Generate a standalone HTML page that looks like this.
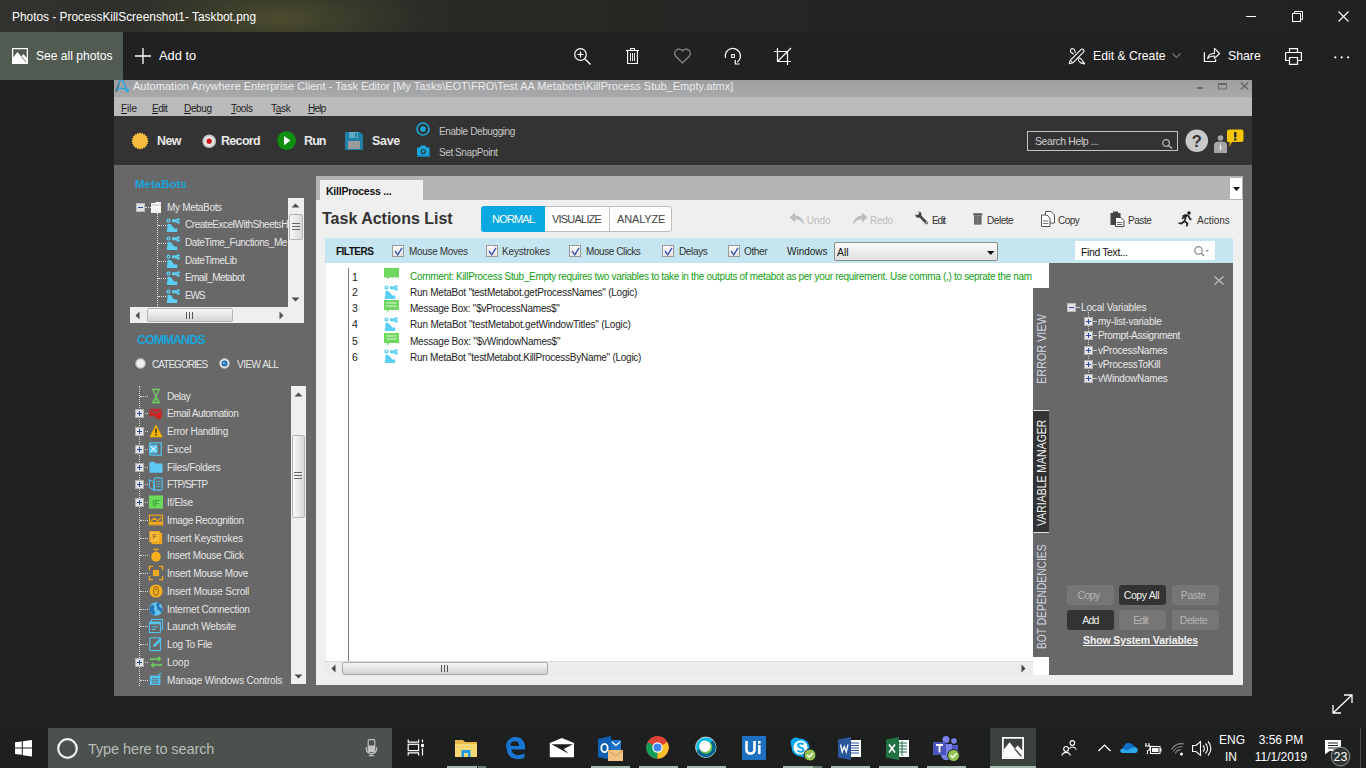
<!DOCTYPE html>
<html><head><meta charset="utf-8">
<style>
*{box-sizing:border-box;margin:0;padding:0}
html,body{width:1366px;height:768px;overflow:hidden;background:#212121;font-family:"Liberation Sans",sans-serif;position:relative}
.a{position:absolute;white-space:nowrap}
svg{position:absolute;overflow:visible}
#titlebar{left:0;top:0;width:1366px;height:32px;background:radial-gradient(ellipse 150px 45px at 280px 18px,#4b4c2e 0%,#3d3e2b 40%,rgba(40,40,36,0) 100%),linear-gradient(90deg,#32332f 0%,#2e2f2b 12%,#2a2b27 30%,#252523 55%,#222 100%)}
.pt{color:#fff;font-size:12.5px}
#toolbar{left:0;top:32px;width:1366px;height:48px;background:#212121}
#taskbar{left:0;top:728px;width:1366px;height:40px;background:#1e201f}

.menu{color:#1e1e1e;font-size:10px}
.tbt{color:#e8e8e8;font-size:12.5px;font-weight:bold}
.dbt{color:#c6c6c6;font-size:10px}
.mh{color:#1aa5dc;font-size:11.5px;font-weight:bold}
.tl{color:#e6e6e6;font-size:10px}
.pbox{width:9px;height:9px;background:#e4e4e4;border:1px solid #b0b0b0}
.pbox::before{content:"";position:absolute;left:1px;top:3px;width:5px;height:1px;background:#2c4aa0}
.pbox::after{content:"";position:absolute;left:3px;top:1px;width:1px;height:5px;background:#2c4aa0}

.seg{color:#444;font-size:11px}
.atb{color:#333;font-size:10px}
.cb{width:12px;height:12px;border:1px solid #9a9a9a;background:linear-gradient(#fafafa,#e6e6e6)}
.rn{color:#222;font-size:10.5px;line-height:12px}
.rt{font-size:10px;line-height:12px}
.vt{font-size:12px;line-height:14px}
.vl{color:#eaeaea;font-size:10px;line-height:12px}
.vb{border-radius:3px;font-size:10.5px;text-align:center;line-height:20px}
/*LS*/
#t6{letter-spacing:0.032px}
#t8{letter-spacing:-0.51px}
#t9{letter-spacing:-0.338px}
#t10{letter-spacing:-0.36px}
#t11{letter-spacing:-0.3px}
#t12{letter-spacing:-0.78px}
#t13{letter-spacing:-0.63px}
#t14{letter-spacing:-0.684px}
#t15{letter-spacing:-0.9px}
#t16{letter-spacing:-0.3px}
#t17{letter-spacing:-0.396px}
#t18{letter-spacing:-0.42px}
#t19{letter-spacing:-0.411px}
#t21{letter-spacing:-0.324px}
#t22{letter-spacing:-0.45px}
#t23{letter-spacing:-0.45px}
#t24{letter-spacing:-0.423px}
#t25{letter-spacing:-0.57px}
#t26{letter-spacing:-1.215px}
#t27{letter-spacing:-0.231px}
#t29{letter-spacing:-0.81px}
#t30{letter-spacing:-0.788px}
#t31{letter-spacing:-0.15px}
#t33{letter-spacing:-0.3px}
#t34{letter-spacing:-1.05px}
#t35{letter-spacing:-0.45px}
#t36{letter-spacing:-0.51px}
#t37{letter-spacing:-0.45px}
#t39{letter-spacing:-0.51px}
#t40{letter-spacing:-0.324px}
#t41{letter-spacing:-0.17px}
#t42{letter-spacing:-0.417px}
#t43{letter-spacing:-0.36px}
#t44{letter-spacing:-0.382px}
#t47{letter-spacing:-0.385px}
#t48{letter-spacing:-0.314px}
#t50{letter-spacing:-0.229px}
#t52{letter-spacing:-0.254px}
#t54{letter-spacing:-0.184px}
#t56{letter-spacing:-0.219px}
#t58{letter-spacing:-0.26px}
#t62{letter-spacing:-0.154px}
#t63{letter-spacing:-0.228px}
#t64{letter-spacing:-0.349px}
#t65{letter-spacing:-0.278px}
#t66{letter-spacing:-0.187px}
#t67{letter-spacing:-0.221px}
#t68{letter-spacing:-0.66px}
#t69{letter-spacing:-0.36px}
#t70{letter-spacing:-0.405px}
#t71{letter-spacing:-0.81px}
#t72{letter-spacing:-0.9px}
#t73{letter-spacing:-0.486px}
#t74{letter-spacing:-0.112px}
#t75{letter-spacing:-0.9px}
#t76{letter-spacing:-0.96px}
#t77{letter-spacing:-0.521px}
#t78{letter-spacing:-0.473px}
#t79{letter-spacing:-0.402px}
#t80{letter-spacing:-0.249px}
#t82{letter-spacing:-0.286px}
#t83{letter-spacing:-0.875px}
#t84{letter-spacing:-0.3px}
#t85{letter-spacing:-0.393px}
#t86{letter-spacing:-0.084px}
#t87{letter-spacing:-0.302px}
#t88{letter-spacing:-0.225px}
#t89{letter-spacing:-0.18px}
#t90{letter-spacing:-0.25px}
#t91{letter-spacing:-0.187px}
#t92{letter-spacing:-0.333px}
#t94{letter-spacing:-0.18px}
/*ENDLS*/
</style></head><body>
<svg width="0" height="0" style="position:absolute;left:0;top:0"><defs>
<g id="robot"><circle cx="2.5" cy="2.6" r="1.45" fill="none" stroke="#5ccff5" stroke-width="1.3"/><rect x="6.1" y="1.3" width="4.6" height="3" fill="#5ccff5"/><path d="M10.4 0.9Q12 -0.3 13.9 0.9V2.2H12.2V3.6H13.9V4.9Q12 6.2 10.4 4.9Z" fill="#5ccff5"/><path d="M1.3 5.9H4.7L8.2 10.6H11.2V13.9H0.9V10.9H1.4Z" fill="#5ccff5"/></g>
<g id="i-delay"><path d="M3.5 0.5H12.5M3.5 15.5H12.5" stroke="#6fd45f" stroke-width="1.6"/><path d="M4.5 1.5L8 8L4.5 14.5M11.5 1.5L8 8L11.5 14.5" fill="none" stroke="#6fd45f" stroke-width="1.3"/><path d="M6 13.5L8 10.5L10 13.5Z" fill="#6fd45f"/></g>
<g id="i-email"><path d="M0.5 3H14.5V12H0.5Z" fill="#c02a2a"/><path d="M0.5 3L7.5 8.5L14.5 3" fill="none" stroke="#666" stroke-width="1.1"/><circle cx="11" cy="11.5" r="3.5" fill="#d42020"/></g>
<g id="i-warn"><path d="M8 0.5L15.5 15H0.5Z" fill="#f5b400"/><rect x="7.2" y="5" width="1.7" height="5.5" fill="#333"/><rect x="7.2" y="11.5" width="1.7" height="1.7" fill="#333"/></g>
<g id="i-excel"><rect x="1" y="1" width="13" height="14" fill="none" stroke="#52c4f0" stroke-width="1.4"/><rect x="0" y="3" width="10" height="10" fill="#52c4f0"/><path d="M2 5L8 11M8 5L2 11" stroke="#e8f4fa" stroke-width="1.3"/></g>
<g id="i-folder"><path d="M0.5 2H6L7.5 4H15.5V14.5H0.5Z" fill="#5cc8f2"/></g>
<g id="i-ftp"><rect x="6" y="1" width="9" height="14" rx="1.5" fill="none" stroke="#52c4f0" stroke-width="1.3"/><path d="M8 5H13M8 8H13M8 11H13" stroke="#52c4f0" stroke-width="1"/><path d="M0.5 3L5.5 6V15L0.5 12Z" fill="none" stroke="#52c4f0" stroke-width="1.2"/></g>
<g id="i-ifelse"><rect x="0" y="0.5" width="16" height="15" fill="#6ad95c"/><text x="8" y="12" font-size="9.5" fill="#2e8f2a" text-anchor="middle" font-family="Liberation Sans">IF</text></g>
<g id="i-imgrec"><rect x="0.5" y="2.5" width="15" height="11" fill="none" stroke="#f2a81d" stroke-width="1.3"/><path d="M2 9L6 6L10 9L14 5" fill="none" stroke="#f2a81d" stroke-width="1.5"/><rect x="1" y="10" width="14" height="3" fill="#f2a81d"/></g>
<g id="i-keys"><rect x="3" y="2" width="12" height="13" fill="#f2a81d"/><rect x="1" y="0.5" width="11" height="12" fill="#f6bb3a" stroke="#f2a81d"/><text x="6.5" y="9.5" font-size="8" fill="#7a5000" text-anchor="middle" font-family="Liberation Sans">F</text></g>
<g id="i-mclick"><path d="M8 1V4" stroke="#f2a81d" stroke-width="1.4"/><ellipse cx="8" cy="10" rx="5.5" ry="5.8" fill="#f6b01e"/><path d="M5 1.5H11" stroke="#f2a81d" stroke-width="1.4"/></g>
<g id="i-mmove"><path d="M0.5 4.5V0.5H4.5M11.5 0.5H15.5V4.5M15.5 11.5V15.5H11.5M4.5 15.5H0.5V11.5" fill="none" stroke="#f2a81d" stroke-width="1.5"/><rect x="4.5" y="4.5" width="7" height="7" fill="#f2a81d"/></g>
<g id="i-mscroll"><circle cx="8" cy="8" r="7.5" fill="#f6b01e"/><rect x="5.5" y="3" width="5" height="10" rx="2.5" fill="none" stroke="#7a5400" stroke-width="1"/><path d="M8 5V7" stroke="#7a5400" stroke-width="1"/></g>
<g id="i-globe"><circle cx="8" cy="8" r="7.6" fill="#62c6f0"/><path d="M2.5 3.5C4 3 5.5 3.5 6 5C6.5 6.5 5 7 5.5 8.5C6 10 7.5 10 7 12C6.8 13.5 6 14.5 5.5 15C3 14 1 11.5 0.6 8.5C1 6 1.5 4.5 2.5 3.5ZM9 1C10.5 0.8 12 1.3 13 2C12.5 3.5 11 3.5 11.5 5C12 6 13.5 6 15 7C15.3 9 14.8 11 14 12.5C13 11.5 12.5 10 11 9.5C10 9.2 9 8 9.2 6.5C9.5 5 8 4 8.5 2.5Z" fill="#2477b8"/></g>
<g id="i-web"><rect x="3" y="0.5" width="12.5" height="11" fill="none" stroke="#52c4f0" stroke-width="1.2"/><rect x="0.5" y="3.5" width="12.5" height="12" fill="#686868" stroke="#52c4f0" stroke-width="1.2"/><rect x="0.5" y="3.5" width="12.5" height="2.5" fill="#52c4f0"/><path d="M3 9H10M3 12H8" stroke="#52c4f0" stroke-width="1.1"/></g>
<g id="i-log"><rect x="1" y="1" width="12" height="14.5" fill="none" stroke="#52c4f0" stroke-width="1.3"/><path d="M4.5 11.5L5.5 8.5L12.5 1.5L14.5 3.5L7.5 10.5Z" fill="#52c4f0"/></g>
<g id="i-loop"><path d="M2 6V4.5H13M10.5 2L13 4.5L10.5 7M14 10V11.5H3M5.5 9L3 11.5L5.5 14" fill="none" stroke="#6fd45f" stroke-width="1.6"/></g>
<g id="i-mwc"><rect x="1" y="3" width="12" height="12.5" fill="#52c4f0"/><path d="M3 6.5H11M3 9H11M3 11.5H11" stroke="#686868" stroke-width="1.1"/><path d="M10 3L14 0" stroke="#52c4f0" stroke-width="1.3"/></g>
<g id="comment"><path d="M0 0H15V9.5H5L3 11.5V9.5H0Z" fill="#6fd95f"/></g>
<g id="msgbox"><path d="M0 0H15V10H5L3 12.5V10H0Z" fill="#6fd95f"/><path d="M2.5 3H12.5M2.5 6H12.5" stroke="#e0f8dc" stroke-width="1.1"/></g>
</defs></svg>
<!-- Photos title bar -->
<div id="titlebar" class="a"></div>
<div class="a pt" style="left:12px;top:10px;transform:scaleX(0.95);transform-origin:0 0" id="t1">Photos - ProcessKillScreenshot1- Taskbot.png</div>
<!-- window controls -->
<svg style="left:1246px;top:16px" width="12" height="2"><rect x="0" y="0" width="10" height="1" fill="#fff"/></svg>
<svg style="left:1292px;top:10.5px" width="12" height="12"><rect x="0.5" y="2.5" width="8" height="8" fill="none" stroke="#fff"/><path d="M2.5 2.5V0.5H10.5V8.5H8.5" fill="none" stroke="#fff"/></svg>
<svg style="left:1338px;top:11px" width="12" height="12"><path d="M0.5 0.5L10.5 10.5M10.5 0.5L0.5 10.5" stroke="#fff" stroke-width="1.1"/></svg>

<!-- Photos toolbar -->
<div id="toolbar" class="a"></div>
<div class="a" style="left:0;top:32px;width:123px;height:48px;background:#515b52"></div>
<svg style="left:12px;top:48px" width="16" height="16"><rect x="0.62" y="0.62" width="14.76" height="14.76" fill="none" stroke="#fff" stroke-width="1.25"/><path d="M1 9.4L5.5 3.9L9.3 8.6L11.4 6.1L15 10.2V15H1Z" fill="#fff"/><path d="M9.3 8.6L14 14" stroke="#515b52" stroke-width="0.9"/></svg>
<div class="a pt" style="left:35.5px;top:48px;font-size:13.5px;transform:scaleX(0.895);transform-origin:0 0" id="t2">See all photos</div>
<svg style="left:135px;top:48px" width="16" height="16"><path d="M8 0V16M0 8H16" stroke="#fff" stroke-width="1.3"/></svg>
<div class="a pt" style="left:159px;top:48px;font-size:13.5px;transform:scaleX(0.953);transform-origin:0 0" id="t3">Add to</div>
<!-- center icons -->
<svg style="left:574px;top:48px" width="18" height="17"><circle cx="6.5" cy="6.5" r="5.8" fill="none" stroke="#fff" stroke-width="1.2"/><path d="M6.5 3.5V9.5M3.5 6.5H9.5" stroke="#fff" stroke-width="1.2"/><path d="M10.8 10.8L16.5 16.5" stroke="#fff" stroke-width="1.3"/></svg>
<svg style="left:626px;top:48px" width="14" height="17"><path d="M0 2.5H13" stroke="#fff" stroke-width="1.1"/><rect x="4.5" y="0.5" width="4" height="2" fill="none" stroke="#fff" stroke-width="1"/><path d="M1.6 2.5V15.5H11.4V2.5" fill="none" stroke="#fff" stroke-width="1.1"/><path d="M4.5 5V13M6.5 5V13M8.5 5V13" stroke="#fff" stroke-width="0.9"/></svg>
<svg style="left:674px;top:49px" width="18" height="15"><path d="M8.5 14L1.5 7A3.8 3.8 0 0 1 8.5 1.8A3.8 3.8 0 0 1 15.5 7Z" fill="none" stroke="#8a8a8a" stroke-width="1.2"/></svg>
<svg style="left:724px;top:47px" width="18" height="18"><path d="M1.5 11A7.6 7.6 0 1 1 13.3 15.2" fill="none" stroke="#fff" stroke-width="1.2"/><path d="M11.3 13V17H15.5" fill="none" stroke="#fff" stroke-width="1.2"/><rect x="7.6" y="7.6" width="2.8" height="2.8" fill="none" stroke="#fff" stroke-width="1"/></svg>
<svg style="left:774px;top:48px" width="18" height="17"><path d="M3.5 0V13.5H17M0 3.5H13.5V17M17 0L3.5 13.5" fill="none" stroke="#fff" stroke-width="1.2"/></svg>
<!-- right toolbar -->
<svg style="left:1068px;top:48px" width="18" height="17"><path d="M1.2 15.8L2.3 12.3L13 1.6A1.75 1.75 0 0 1 15.5 4.1L4.8 14.8Z" fill="none" stroke="#fff" stroke-width="1.1" stroke-linejoin="round"/><path d="M2.3 12.3L4.8 14.8" stroke="#fff" stroke-width="1"/><path d="M5.8 6.2L3.6 4.8A2.2 2.2 0 1 1 6.8 3L7.6 4.8" fill="none" stroke="#fff" stroke-width="1.1"/><path d="M9.8 10.3C11.2 9.6 12.8 10.2 13.8 11.8L16.6 15.9L12.3 14.6C11 13.9 10.2 12.5 10.4 11.2" fill="none" stroke="#fff" stroke-width="1.1" stroke-linejoin="round"/></svg>
<div class="a pt" style="left:1092.5px;top:48px;font-size:13.5px;transform:scaleX(0.904);transform-origin:0 0" id="t4">Edit &amp; Create</div>
<svg style="left:1172px;top:53px" width="10" height="6"><path d="M0.5 0.5L4.5 4.5L8.5 0.5" fill="none" stroke="#6f7a70" stroke-width="1.2"/></svg>
<svg style="left:1203px;top:47px" width="18" height="17"><path d="M1.4 5.2V14.5H12.6V12.3" fill="none" stroke="#fff" stroke-width="1.2"/><path d="M4.7 11.6C5 8 8 6.5 11.4 6.5V1.4L16.6 6.5L11.4 11.4V9C8.5 9 6 9.8 4.7 11.6Z" fill="none" stroke="#fff" stroke-width="1.1" stroke-linejoin="round"/></svg>
<div class="a pt" style="left:1227.5px;top:48px;font-size:13.5px;transform:scaleX(0.91);transform-origin:0 0" id="t5">Share</div>
<svg style="left:1285px;top:48px" width="18" height="17"><path d="M4.5 4.5V0.6H12.5V4.5M0.6 4.5H16.4V12.5H12.5M4.5 12.5H0.6V4.5M4.5 9.5H12.5V16.4H4.5Z" fill="none" stroke="#fff" stroke-width="1.2"/></svg>
<svg style="left:1334px;top:56px" width="17" height="3"><circle cx="1.3" cy="1.3" r="1.1" fill="#fff"/><circle cx="7.7" cy="1.3" r="1.1" fill="#fff"/><circle cx="14.1" cy="1.3" r="1.1" fill="#fff"/></svg>


<!-- ===== AA app screenshot ===== -->
<div class="a" style="left:114px;top:80px;width:1138px;height:616px;background:#686868"></div>
<div class="a" style="left:114px;top:80px;width:1138px;height:18px;background:linear-gradient(#9d9ea0,#a9aaac)"></div>
<div class="a" style="left:114px;top:97px;width:1138px;height:1px;background:#b6b7b9"></div>
<svg style="left:114px;top:80px" width="16" height="14"><defs><linearGradient id="lg1" x1="0" y1="0" x2="0" y2="1"><stop offset="0" stop-color="#2aa6e0"/><stop offset="1" stop-color="#3a4a55"/></linearGradient></defs><path d="M6.2 0L2.2 11.4" stroke="url(#lg1)" stroke-width="1.5"/><path d="M8.6 0L12.6 9.8" stroke="#22a8e2" stroke-width="1.6"/><path d="M3 9.6Q8 6.8 12.8 9.8" fill="none" stroke="#22a8e2" stroke-width="1.3"/><circle cx="13.3" cy="10.6" r="1.8" fill="#22a8e2"/></svg>
<div class="a" style="left:133px;top:80px;color:#ececec;font-size:11px;line-height:13px" id="t6">Automation Anywhere Enterprise Client - Task Editor [My Tasks\EOT\FRO\Test AA Metabots\KillProcess Stub_Empty.atmx]</div>
<div class="a" style="left:1197px;top:87px;width:6px;height:2px;background:#6a6a6a"></div>
<svg style="left:1218px;top:83px" width="9" height="7"><rect x="0.5" y="0.5" width="8" height="5.5" fill="none" stroke="#6a6a6a"/><rect x="0" y="0" width="9" height="2" fill="#6a6a6a"/></svg>
<svg style="left:1240px;top:82px" width="9" height="8"><path d="M0.8 0.5L8.2 7.5M8.2 0.5L0.8 7.5" stroke="#6a6a6a" stroke-width="1.6"/></svg>
<!-- menu -->
<div class="a" style="left:114px;top:98px;width:1138px;height:18px;background:#bbbbbb"></div>
<div class="a menu" style="left:121px;top:103px" id="t7"><u>F</u>ile</div>
<div class="a menu" style="left:152px;top:103px" id="t8"><u>E</u>dit</div>
<div class="a menu" style="left:184px;top:103px" id="t9"><u>D</u>ebug</div>
<div class="a menu" style="left:231px;top:103px" id="t10"><u>T</u>ools</div>
<div class="a menu" style="left:271px;top:103px" id="t11">T<u>a</u>sk</div>
<div class="a menu" style="left:308px;top:103px" id="t12"><u>H</u>elp</div>
<!-- toolbar -->
<div class="a" style="left:114px;top:116px;width:1138px;height:49px;background:#333333"></div>
<svg style="left:131px;top:132px" width="18" height="18"><polygon points="17.70,9.00 16.21,10.14 17.27,11.69 15.50,12.31 16.04,14.11 14.16,14.16 14.11,16.04 12.31,15.50 11.69,17.27 10.14,16.21 9.00,17.70 7.86,16.21 6.31,17.27 5.69,15.50 3.89,16.04 3.84,14.16 1.96,14.11 2.50,12.31 0.73,11.69 1.79,10.14 0.30,9.00 1.79,7.86 0.73,6.31 2.50,5.69 1.96,3.89 3.84,3.84 3.89,1.96 5.69,2.50 6.31,0.73 7.86,1.79 9.00,0.30 10.14,1.79 11.69,0.73 12.31,2.50 14.11,1.96 14.16,3.84 16.04,3.89 15.50,5.69 17.27,6.31 16.21,7.86" fill="#f6bd3e"/></svg>
<div class="a tbt" style="left:157px;top:134px" id="t13">New</div>
<svg style="left:202px;top:134px" width="15" height="15"><circle cx="7.2" cy="7.2" r="6.8" fill="#c7c7c7"/><circle cx="7.2" cy="7.2" r="5" fill="#e6e6e6"/><circle cx="7.2" cy="7.2" r="2.6" fill="#d4141b"/></svg>
<div class="a tbt" style="left:221px;top:134px" id="t14">Record</div>
<svg style="left:277px;top:131px" width="20" height="20"><circle cx="9.6" cy="9.6" r="9.4" fill="#0f8f0f"/><path d="M7 5L13.5 9.6L7 14.2Z" fill="#fff"/></svg>
<div class="a tbt" style="left:304px;top:134px" id="t15">Run</div>
<svg style="left:345px;top:132px" width="19" height="18"><path d="M0 1A1 1 0 0 1 1 0H15L18 3V17A1 1 0 0 1 17 18H1A1 1 0 0 1 0 17Z" fill="#1f7fa6"/><rect x="4" y="0" width="9" height="6" fill="#5fa8c6"/><rect x="10" y="1" width="2" height="4" fill="#1f7fa6"/><rect x="3" y="9" width="12" height="8" fill="#9a9a9a"/></svg>
<div class="a tbt" style="left:372px;top:134px" id="t16">Save</div>
<svg style="left:416px;top:122px" width="15" height="15"><circle cx="7" cy="7" r="6" fill="none" stroke="#16a8dc" stroke-width="1.6"/><circle cx="7" cy="7" r="2.8" fill="#16a8dc"/></svg>
<div class="a dbt" style="left:439px;top:126px" id="t17">Enable Debugging</div>
<svg style="left:417px;top:145px" width="13" height="12"><path d="M0 2.5H3L4 0.5H8.5L9.5 2.5H12.5V11.5H0Z" fill="#16a8dc"/><circle cx="6.3" cy="6.5" r="2.6" fill="#333"/><circle cx="6.3" cy="6.5" r="1.4" fill="#16a8dc"/><rect x="0" y="10" width="12.5" height="1.5" fill="#1290bd"/></svg>
<div class="a dbt" style="left:439px;top:147px" id="t18">Set SnapPoint</div>
<div class="a" style="left:1027px;top:131px;width:151px;height:20px;border:1.5px solid #c4c4c4"></div>
<div class="a" style="left:1035px;top:135px;color:#d0d0d0;font-size:10.5px" id="t19">Search Help ...</div>
<svg style="left:1162px;top:139px" width="11" height="10"><circle cx="4" cy="4" r="3.3" fill="none" stroke="#bbb" stroke-width="1.2"/><path d="M6.5 6.5L10 9.5" stroke="#bbb" stroke-width="1.4"/></svg>
<svg style="left:1185px;top:129px" width="24" height="24"><circle cx="11.8" cy="11.8" r="11.3" fill="#cacaca"/><text x="11.8" y="17.5" font-size="16.5" font-weight="bold" fill="#333" text-anchor="middle" font-family="Liberation Sans">?</text></svg>
<svg style="left:1213px;top:129px" width="31" height="24"><circle cx="7.5" cy="9" r="2.8" fill="#a6a6a6"/><path d="M1 24V16.5C1 13.5 3 12.5 7.5 12.5C12 12.5 14 13.5 14 16.5V24Z" fill="#a6a6a6"/><path d="M7.5 13.5L6.5 20L7.5 21.5L8.5 20Z" fill="#eee"/><path d="M16 0.5H28.5A2 2 0 0 1 30.5 2.5V11A2 2 0 0 1 28.5 13H19L16 18.5L17 13A2 2 0 0 1 14 11V2.5A2 2 0 0 1 16 0.5Z" fill="#f7c600"/><rect x="21" y="3" width="2.5" height="5.5" fill="#333"/><rect x="21" y="9.5" width="2.5" height="2" fill="#333"/></svg>

<!-- left panel -->
<div class="a mh" style="left:135px;top:178px" id="t20">MetaBots</div>
<div class="a" style="left:288px;top:198px;width:16px;height:109px;background:#efefef"></div>
<svg style="left:291px;top:203px" width="9" height="5"><path d="M0.5 4.5L4.5 0.5L8.5 4.5Z" fill="#505050"/></svg>
<div class="a" style="left:289px;top:214px;width:14px;height:26px;background:linear-gradient(90deg,#f8f8f8,#d8d8d8);border:1px solid #b4b4b4;border-radius:2px"></div>
<svg style="left:292px;top:223px" width="8" height="7"><path d="M0 0.5H8M0 3.5H8M0 6.5H8" stroke="#666" stroke-width="1"/></svg>
<svg style="left:291px;top:297px" width="9" height="5"><path d="M0.5 0.5L4.5 4.5L8.5 0.5Z" fill="#505050"/></svg>
<div class="a" style="left:130px;top:307px;width:174px;height:16px;background:#efefef"></div>
<svg style="left:135px;top:311px" width="5" height="9"><path d="M4.5 0.5L0.5 4.5L4.5 8.5Z" fill="#505050"/></svg>
<div class="a" style="left:147px;top:308px;width:86px;height:14px;background:linear-gradient(#f8f8f8,#d4d4d4);border:1px solid #b4b4b4;border-radius:2px"></div>
<svg style="left:186px;top:312px" width="7" height="7"><path d="M0.5 0V7M3.5 0V7M6.5 0V7" stroke="#555" stroke-width="1"/></svg>
<svg style="left:279px;top:311px" width="5" height="9"><path d="M0.5 0.5L4.5 4.5L0.5 8.5Z" fill="#505050"/></svg>
<!-- tree -->
<div class="a" style="left:136px;top:203px;width:9px;height:9px;background:#e0e0e0;border:1px solid #bbb"></div>
<div class="a" style="left:138px;top:207px;width:5px;height:1px;background:#2c4aa0"></div>
<div class="a" style="left:145px;top:207px;width:6px;border-top:1px dotted #ddd"></div>
<svg style="left:151px;top:202px" width="11" height="11"><path d="M0 1H4L5 0H10V11H0Z" fill="#f4f4f4"/><path d="M0 3H10" stroke="#bbb" stroke-width="0.8"/></svg>
<div class="a tl" style="left:167px;top:202px" id="t21">My MetaBots</div>
<div class="a" style="left:157px;top:213px;height:94px;border-left:1px dotted #ddd"></div>
<div class="a" style="left:130px;top:198px;width:158px;height:109px;overflow:hidden"><div class="a" style="left:-130px;top:-198px;width:400px;height:400px"><div class="a" style="left:158px;top:225px;width:8px;border-top:1px dotted #ddd"></div><svg class="rb" style="left:166px;top:218px" width="15" height="15"><use href="#robot"/></svg><div class="a tl" style="left:185px;top:219px;width:103px;overflow:hidden" id="t22">CreateExcelWithSheetsH</div>
<div class="a" style="left:158px;top:243px;width:8px;border-top:1px dotted #ddd"></div><svg class="rb" style="left:166px;top:236px" width="15" height="15"><use href="#robot"/></svg><div class="a tl" style="left:185px;top:237px;width:103px;overflow:hidden" id="t23">DateTime_Functions_Me</div>
<div class="a" style="left:158px;top:261px;width:8px;border-top:1px dotted #ddd"></div><svg class="rb" style="left:166px;top:254px" width="15" height="15"><use href="#robot"/></svg><div class="a tl" style="left:185px;top:255px;width:103px;overflow:hidden" id="t24">DateTimeLib</div>
<div class="a" style="left:158px;top:278px;width:8px;border-top:1px dotted #ddd"></div><svg class="rb" style="left:166px;top:271px" width="15" height="15"><use href="#robot"/></svg><div class="a tl" style="left:185px;top:272px;width:103px;overflow:hidden" id="t25">Email_Metabot</div>
<div class="a" style="left:158px;top:296px;width:8px;border-top:1px dotted #ddd"></div><svg class="rb" style="left:166px;top:289px" width="15" height="15"><use href="#robot"/></svg><div class="a tl" style="left:185px;top:290px;width:103px;overflow:hidden" id="t26">EWS</div>
<div class="a" style="left:158px;top:313.9px;width:8px;border-top:1px dotted #ddd"></div><svg style="left:166px;top:307px" width="15" height="15"><use href="#robot"/></svg></div></div>

<!-- right panel -->
<div class="a" style="left:316px;top:176px;width:927px;height:509px;background:#efefef"></div>
<div class="a" style="left:316px;top:176px;width:927px;height:24px;background:#b3b3b3"></div>
<div class="a" style="left:320px;top:180px;width:103px;height:20px;background:#efefef"></div>
<div class="a" style="left:326px;top:185px;color:#111;font-size:10.5px;font-weight:bold" id="t27">KillProcess ...</div>
<div class="a" style="left:1230px;top:178px;width:12px;height:21px;background:#fff"></div>
<svg style="left:1233px;top:187px" width="7" height="4"><path d="M0 0H7L3.5 4Z" fill="#111"/></svg>
<div class="a" style="left:322px;top:210px;color:#333;font-size:16px;font-weight:bold" id="t28">Task Actions List</div>
<div class="a" style="left:481px;top:206px;width:191px;height:25.5px;border:1px solid #bdbdbd;border-radius:3px;background:#fff"></div>
<div class="a" style="left:481px;top:206px;width:64px;height:25.5px;background:#0aa8e0;border-radius:3px 0 0 3px"></div>
<div class="a" style="left:609px;top:207px;width:1px;height:23.5px;background:#c4c4c4"></div>
<div class="a seg" style="left:492px;top:213px;color:#fff" id="t29">NORMAL</div>
<div class="a seg" style="left:552px;top:213px" id="t30">VISUALIZE</div>
<div class="a seg" style="left:617px;top:213px" id="t31">ANALYZE</div>
<!-- action toolbar -->
<svg style="left:789px;top:212px" width="16" height="14"><path d="M6 0.5L0.5 5.5L6 10.5V7.5C10 7.5 13 8.5 15 13.5C15 8 12 4 6 3.5Z" fill="#bdbdbd"/></svg>
<div class="a atb" style="left:806.7px;top:214.5px;color:#bdbdbd" id="t32">Undo</div>
<svg style="left:852px;top:212px" width="16" height="14"><path d="M10 0.5L15.5 5.5L10 10.5V7.5C6 7.5 3 8.5 1 13.5C1 8 4 4 10 3.5Z" fill="#bdbdbd"/></svg>
<div class="a atb" style="left:870px;top:214.5px;color:#bdbdbd" id="t33">Redo</div>
<svg style="left:915px;top:211px" width="14" height="15"><path d="M4.3 4.3L11.6 12" stroke="#444" stroke-width="2.6" stroke-linecap="round"/><circle cx="3.4" cy="3.6" r="3.1" fill="#444"/><path d="M-0.6 2.2L2.2 -0.6L4.3 1.5L3.6 3.4L1.5 4.3Z" fill="#efefef"/><circle cx="11.4" cy="11.8" r="0.75" fill="#efefef"/></svg>
<div class="a atb" style="left:932px;top:214.5px" id="t34">Edit</div>
<svg style="left:973px;top:213px" width="10" height="12"><rect x="0.3" y="0.3" width="9" height="2" fill="#555"/><rect x="1" y="2.3" width="7.6" height="9.3" fill="#6a6a6a"/><path d="M4.8 3V11" stroke="#888" stroke-width="1"/></svg>
<div class="a atb" style="left:987px;top:214.5px" id="t35">Delete</div>
<svg style="left:1041px;top:211px" width="14" height="16"><path d="M4.5 0.5H10L13.5 4V12H4.5Z" fill="#fff" stroke="#555" stroke-width="1"/><path d="M0.5 4H6L9 7V15.5H0.5Z" fill="#fff" stroke="#555" stroke-width="1"/><path d="M2 10H7.5M2 12.5H7.5" stroke="#555" stroke-width="0.8"/></svg>
<div class="a atb" style="left:1058px;top:214.5px" id="t36">Copy</div>
<svg style="left:1110px;top:211px" width="15" height="16"><rect x="0.5" y="2" width="10" height="12" fill="#444"/><rect x="3" y="0.5" width="5" height="3" fill="#444"/><path d="M5.5 6.5H11L14 9.5V15.5H5.5Z" fill="#fff" stroke="#444" stroke-width="1"/><path d="M7 11.5H12.5M7 13.5H12.5" stroke="#444" stroke-width="0.8"/></svg>
<div class="a atb" style="left:1128px;top:214.5px" id="t37">Paste</div>
<svg style="left:1178px;top:211px" width="14" height="16"><circle cx="11" cy="2" r="1.8" fill="#222"/><path d="M4.5 5.5L7.5 4L10.5 5L12 8L13.5 8.5M8 5L6.5 10L9.5 12.5L8.5 15.5M6.5 10L3.5 12.5L0.5 12M7.5 4.5L4 8" fill="none" stroke="#222" stroke-width="1.7"/></svg>
<div class="a atb" style="left:1197px;top:214.5px" id="t38">Actions</div>
<!-- filters -->
<div class="a" style="left:325px;top:238px;width:908px;height:25px;background:#c5e6f0"></div>
<div class="a" style="left:336px;top:245.5px;color:#111;font-size:10px;font-weight:bold" id="t39">FILTERS</div>
<div class="a cb" style="left:392px;top:245px"></div><svg style="left:394px;top:247px" width="9" height="9"><path d="M1 4L3.8 7.8L8 0.8" fill="none" stroke="#3450b0" stroke-width="1.3"/></svg><div class="a atb" style="left:409px;top:245.5px;color:#333" id="t40">Mouse Moves</div>
<div class="a cb" style="left:486px;top:245px"></div><svg style="left:488px;top:247px" width="9" height="9"><path d="M1 4L3.8 7.8L8 0.8" fill="none" stroke="#3450b0" stroke-width="1.3"/></svg><div class="a atb" style="left:502px;top:245.5px;color:#333" id="t41">Keystrokes</div>
<div class="a cb" style="left:569px;top:245px"></div><svg style="left:571px;top:247px" width="9" height="9"><path d="M1 4L3.8 7.8L8 0.8" fill="none" stroke="#3450b0" stroke-width="1.3"/></svg><div class="a atb" style="left:586px;top:245.5px;color:#333" id="t42">Mouse Clicks</div>
<div class="a cb" style="left:662px;top:245px"></div><svg style="left:664px;top:247px" width="9" height="9"><path d="M1 4L3.8 7.8L8 0.8" fill="none" stroke="#3450b0" stroke-width="1.3"/></svg><div class="a atb" style="left:679px;top:245.5px;color:#333" id="t43">Delays</div>
<div class="a cb" style="left:728px;top:245px"></div><svg style="left:730px;top:247px" width="9" height="9"><path d="M1 4L3.8 7.8L8 0.8" fill="none" stroke="#3450b0" stroke-width="1.3"/></svg><div class="a atb" style="left:744px;top:245.5px;color:#333" id="t44">Other</div>

<div class="a atb" style="left:787px;top:245.5px;color:#222" id="t45">Windows</div>
<div class="a" style="left:834px;top:242px;width:164px;height:19px;border:1px solid #8a8a8a;border-radius:2px;background:linear-gradient(#fcfcfc,#dedede)"></div>
<div class="a" style="left:837px;top:246px;color:#111;font-size:10.5px" id="t46">All</div>
<svg style="left:987px;top:251px" width="8" height="5"><path d="M0 0H7.5L3.75 4Z" fill="#111"/></svg>
<div class="a" style="left:1075px;top:241px;width:140px;height:19px;background:#fff"></div>
<div class="a" style="left:1081px;top:245.5px;color:#111;font-size:10.5px" id="t47">Find Text...</div>
<svg style="left:1194px;top:246px" width="16" height="11"><circle cx="4.5" cy="4.5" r="3.8" fill="none" stroke="#888" stroke-width="1.2"/><path d="M7.2 7.2L10 10" stroke="#888" stroke-width="1.5"/><path d="M11.5 4H15L13.25 6Z" fill="#888"/></svg>
<!-- actions list -->
<div class="a" style="left:326px;top:263px;width:707px;height:398px;background:#fff"></div>
<div class="a" style="left:1033px;top:263px;width:16px;height:25px;background:#fff"></div>
<div class="a" style="left:1033px;top:657px;width:16px;height:18px;background:#fff"></div>
<div class="a" style="left:348px;top:268px;width:1px;height:393px;background:#7a7a7a"></div>
<div class="a" style="left:326px;top:263px;width:707px;height:398px;overflow:hidden"><div class="a" style="left:-326px;top:-263px;width:1400px;height:500px"><div class="a rn" style="left:352px;top:270.5px">1</div><svg style="left:384px;top:268.0px" width="15" height="13"><use href="#comment"/></svg><div class="a rt" style="left:410px;top:271px;color:#129e12" id="t48">Comment: KillProcess Stub_Empty requires two variables to take in the outputs of metabot as per your requirement. Use comma (,) to seprate the nam</div>
<div class="a rn" style="left:352px;top:286.1px" id="t49">2</div><svg style="left:384px;top:284.6px" width="15" height="15"><use href="#robot"/></svg><div class="a rt" style="left:410px;top:287.1px;color:#222" id="t50">Run MetaBot &quot;testMetabot.getProcessNames&quot; (Logic)</div>
<div class="a rn" style="left:352px;top:302.3px" id="t51">3</div><svg style="left:384px;top:300.3px" width="15" height="13"><use href="#msgbox"/></svg><div class="a rt" style="left:410px;top:303.3px;color:#222" id="t52">Message Box: &quot;$vProcessNames$&quot;</div>
<div class="a rn" style="left:352px;top:318.4px" id="t53">4</div><svg style="left:384px;top:316.9px" width="15" height="15"><use href="#robot"/></svg><div class="a rt" style="left:410px;top:319.4px;color:#222" id="t54">Run MetaBot &quot;testMetabot.getWindowTitles&quot; (Logic)</div>
<div class="a rn" style="left:352px;top:334.6px" id="t55">5</div><svg style="left:384px;top:332.6px" width="15" height="13"><use href="#msgbox"/></svg><div class="a rt" style="left:410px;top:335.6px;color:#222" id="t56">Message Box: &quot;$vWindowNames$&quot;</div>
<div class="a rn" style="left:352px;top:350.8px" id="t57">6</div><svg style="left:384px;top:349.3px" width="15" height="15"><use href="#robot"/></svg><div class="a rt" style="left:410px;top:351.8px;color:#222" id="t58">Run MetaBot &quot;testMetabot.KillProcessByName&quot; (Logic)</div>
</div></div>
<!-- h scroll -->
<div class="a" style="left:325px;top:661px;width:708px;height:15px;background:#ececec;border-top:1px solid #dcdcdc"></div>
<svg style="left:331px;top:664px" width="5" height="9"><path d="M4.5 0.5L0.5 4.5L4.5 8.5Z" fill="#444"/></svg>
<div class="a" style="left:342px;top:662px;width:206px;height:13px;background:linear-gradient(#f6f6f6,#d0d0d0);border:1px solid #a8a8a8;border-radius:2px"></div>
<svg style="left:441px;top:665px" width="7" height="7"><path d="M0.5 0V7M3.5 0V7M6.5 0V7" stroke="#555" stroke-width="1"/></svg>
<svg style="left:1021px;top:664px" width="5" height="9"><path d="M0.5 0.5L4.5 4.5L0.5 8.5Z" fill="#444"/></svg>
<!-- variable manager -->
<div class="a" style="left:1049px;top:263px;width:184px;height:412px;background:#686868"></div>
<div class="a" style="left:1033px;top:288px;width:16px;height:369px;background:#686868"></div>
<div class="a" style="left:1033px;top:410px;width:16px;height:123px;background:#333;border-top:1px solid #e0e0e0;border-bottom:1px solid #e0e0e0"></div>
<div class="a vt" style="left:1034.5px;top:384px;transform:rotate(-90deg) scaleX(0.902);transform-origin:0 0;color:#ced6e0" id="t59">ERROR VIEW</div>
<div class="a vt" style="left:1034.5px;top:526px;transform:rotate(-90deg) scaleX(0.873);transform-origin:0 0;color:#f4f4f4" id="t60">VARIABLE MANAGER</div>
<div class="a vt" style="left:1034.5px;top:649px;transform:rotate(-90deg) scaleX(0.853);transform-origin:0 0;color:#ced6e0" id="t61">BOT DEPENDENCIES</div>
<svg style="left:1214px;top:276px" width="10" height="9"><path d="M0.5 0.5L9.5 8.5M9.5 0.5L0.5 8.5" stroke="#c0c0c0" stroke-width="1.2"/></svg>
<div class="a" style="left:1067px;top:303px;width:9px;height:9px;background:#e0e0e0;border:1px solid #bbb"></div>
<div class="a" style="left:1069px;top:307px;width:5px;height:1px;background:#2c4aa0"></div>
<div class="a" style="left:1076px;top:307px;width:4px;border-top:1px solid #ccc"></div>
<div class="a vl" style="left:1081px;top:301.5px" id="t62">Local Variables</div>
<div class="a" style="left:1088px;top:312px;height:67px;border-left:1px dotted #ccc"></div>
<div class="a pbox" style="left:1084px;top:317px"></div><div class="a" style="left:1093px;top:321px;width:4px;border-top:1px solid #ccc"></div><div class="a vl" style="left:1098px;top:315.5px" id="t63">my-list-variable</div>
<div class="a pbox" style="left:1084px;top:331px"></div><div class="a" style="left:1093px;top:335px;width:4px;border-top:1px solid #ccc"></div><div class="a vl" style="left:1098px;top:329.5px" id="t64">Prompt-Assignment</div>
<div class="a pbox" style="left:1084px;top:346px"></div><div class="a" style="left:1093px;top:350px;width:4px;border-top:1px solid #ccc"></div><div class="a vl" style="left:1098px;top:344.5px" id="t65">vProcessNames</div>
<div class="a pbox" style="left:1084px;top:360px"></div><div class="a" style="left:1093px;top:364px;width:4px;border-top:1px solid #ccc"></div><div class="a vl" style="left:1098px;top:358.5px" id="t66">vProcessToKill</div>
<div class="a pbox" style="left:1084px;top:374px"></div><div class="a" style="left:1093px;top:378px;width:4px;border-top:1px solid #ccc"></div><div class="a vl" style="left:1098px;top:372.5px" id="t67">vWindowNames</div>

<div class="a vb" style="left:1067px;top:585px;width:47px;height:20px;background:#767676;color:#b4b4b4;text-indent:-4px" id="t68">Copy</div>
<div class="a vb" style="left:1119px;top:585px;width:47px;height:20px;background:#333;color:#f0f0f0;text-indent:-2px" id="t69">Copy All</div>
<div class="a vb" style="left:1172px;top:585px;width:47px;height:20px;background:#767676;color:#b4b4b4;text-indent:-4.6px" id="t70">Paste</div>
<div class="a vb" style="left:1067px;top:610px;width:47px;height:20px;background:#333;color:#f0f0f0" id="t71">Add</div>
<div class="a vb" style="left:1119px;top:610px;width:47px;height:20px;background:#767676;color:#b4b4b4;text-indent:-4px" id="t72">Edit</div>
<div class="a vb" style="left:1172px;top:610px;width:47px;height:20px;background:#767676;color:#b4b4b4;text-indent:-4px" id="t73">Delete</div>
<div class="a" style="left:1083px;top:634px;color:#f2f2f2;font-size:10.5px;font-weight:bold;text-decoration:underline" id="t74">Show System Variables</div>

<!-- commands -->
<div class="a mh" style="left:137px;top:333px;font-size:12.5px" id="t75">COMMANDS</div>
<svg style="left:135px;top:358px" width="12" height="12"><circle cx="5.5" cy="5.5" r="5" fill="#ddd" stroke="#aaa" stroke-width="0.8"/><circle cx="5.5" cy="5.5" r="3.5" fill="#f2f2f2"/></svg>
<div class="a tl" style="left:152px;top:358.5px" id="t76">CATEGORIES</div>
<svg style="left:219px;top:358px" width="12" height="12"><circle cx="5.5" cy="5.5" r="5" fill="#e8e8e8" stroke="#a8a8a8" stroke-width="0.8"/><circle cx="5.5" cy="5.5" r="3" fill="#1a5a9a"/><circle cx="5.5" cy="5.5" r="2" fill="#2a8ad0"/><circle cx="4.8" cy="4.8" r="0.8" fill="#bfe3ff"/></svg>
<div class="a tl" style="left:237px;top:358.5px" id="t77">VIEW ALL</div>
<div class="a" style="left:291px;top:386px;width:15px;height:298px;background:#efefef"></div>
<svg style="left:294px;top:392px" width="9" height="5"><path d="M0.5 4.5L4.5 0.5L8.5 4.5Z" fill="#505050"/></svg>
<div class="a" style="left:292px;top:435px;width:13px;height:83px;background:linear-gradient(90deg,#f8f8f8,#d8d8d8);border:1px solid #b4b4b4;border-radius:2px"></div>
<svg style="left:294px;top:472px" width="8" height="7"><path d="M0 0.5H8M0 3.5H8M0 6.5H8" stroke="#666" stroke-width="1"/></svg>
<svg style="left:294px;top:674px" width="9" height="5"><path d="M0.5 0.5L4.5 4.5L8.5 0.5Z" fill="#505050"/></svg>
<div class="a" style="left:139px;top:386px;height:300px;border-left:1px dotted #ddd"></div>
<div class="a" style="left:130px;top:386px;width:161px;height:299px;overflow:hidden"><div class="a" style="left:-130px;top:-386px;width:400px;height:800px"><div class="a" style="left:140px;top:396px;width:8px;border-top:1px dotted #ddd"></div><svg style="left:149px;top:389px" width="14" height="14" viewBox="0 0 16 16"><use href="#i-delay"/></svg><div class="a tl" style="left:167px;top:391px" id="t78">Delay</div>
<div class="a" style="left:140px;top:413px;width:8px;border-top:1px dotted #ddd"></div><div class="a pbox" style="left:135px;top:409px"></div><svg style="left:149px;top:406px" width="14" height="14" viewBox="0 0 16 16"><use href="#i-email"/></svg><div class="a tl" style="left:167px;top:408px" id="t79">Email Automation</div>
<div class="a" style="left:140px;top:431px;width:8px;border-top:1px dotted #ddd"></div><div class="a pbox" style="left:135px;top:427px"></div><svg style="left:149px;top:424px" width="14" height="14" viewBox="0 0 16 16"><use href="#i-warn"/></svg><div class="a tl" style="left:167px;top:426px" id="t80">Error Handling</div>
<div class="a" style="left:140px;top:449px;width:8px;border-top:1px dotted #ddd"></div><div class="a pbox" style="left:135px;top:445px"></div><svg style="left:149px;top:442px" width="14" height="14" viewBox="0 0 16 16"><use href="#i-excel"/></svg><div class="a tl" style="left:167px;top:444px" id="t81">Excel</div>
<div class="a" style="left:140px;top:467px;width:8px;border-top:1px dotted #ddd"></div><div class="a pbox" style="left:135px;top:463px"></div><svg style="left:149px;top:460px" width="14" height="14" viewBox="0 0 16 16"><use href="#i-folder"/></svg><div class="a tl" style="left:167px;top:462px" id="t82">Files/Folders</div>
<div class="a" style="left:140px;top:484px;width:8px;border-top:1px dotted #ddd"></div><div class="a pbox" style="left:135px;top:480px"></div><svg style="left:149px;top:477px" width="14" height="14" viewBox="0 0 16 16"><use href="#i-ftp"/></svg><div class="a tl" style="left:167px;top:479px" id="t83">FTP/SFTP</div>
<div class="a" style="left:140px;top:502px;width:8px;border-top:1px dotted #ddd"></div><div class="a pbox" style="left:135px;top:498px"></div><svg style="left:149px;top:495px" width="14" height="14" viewBox="0 0 16 16"><use href="#i-ifelse"/></svg><div class="a tl" style="left:167px;top:497px" id="t84">If/Else</div>
<div class="a" style="left:140px;top:520px;width:8px;border-top:1px dotted #ddd"></div><svg style="left:149px;top:513px" width="14" height="14" viewBox="0 0 16 16"><use href="#i-imgrec"/></svg><div class="a tl" style="left:167px;top:515px" id="t85">Image Recognition</div>
<div class="a" style="left:140px;top:538px;width:8px;border-top:1px dotted #ddd"></div><svg style="left:149px;top:531px" width="14" height="14" viewBox="0 0 16 16"><use href="#i-keys"/></svg><div class="a tl" style="left:167px;top:533px" id="t86">Insert Keystrokes</div>
<div class="a" style="left:140px;top:555px;width:8px;border-top:1px dotted #ddd"></div><svg style="left:149px;top:548px" width="14" height="14" viewBox="0 0 16 16"><use href="#i-mclick"/></svg><div class="a tl" style="left:167px;top:550px" id="t87">Insert Mouse Click</div>
<div class="a" style="left:140px;top:573px;width:8px;border-top:1px dotted #ddd"></div><svg style="left:149px;top:566px" width="14" height="14" viewBox="0 0 16 16"><use href="#i-mmove"/></svg><div class="a tl" style="left:167px;top:568px" id="t88">Insert Mouse Move</div>
<div class="a" style="left:140px;top:591px;width:8px;border-top:1px dotted #ddd"></div><svg style="left:149px;top:584px" width="14" height="14" viewBox="0 0 16 16"><use href="#i-mscroll"/></svg><div class="a tl" style="left:167px;top:586px" id="t89">Insert Mouse Scroll</div>
<div class="a" style="left:140px;top:609px;width:8px;border-top:1px dotted #ddd"></div><svg style="left:149px;top:602px" width="14" height="14" viewBox="0 0 16 16"><use href="#i-globe"/></svg><div class="a tl" style="left:167px;top:604px" id="t90">Internet Connection</div>
<div class="a" style="left:140px;top:626px;width:8px;border-top:1px dotted #ddd"></div><svg style="left:149px;top:619px" width="14" height="14" viewBox="0 0 16 16"><use href="#i-web"/></svg><div class="a tl" style="left:167px;top:621px" id="t91">Launch Website</div>
<div class="a" style="left:140px;top:644px;width:8px;border-top:1px dotted #ddd"></div><svg style="left:149px;top:637px" width="14" height="14" viewBox="0 0 16 16"><use href="#i-log"/></svg><div class="a tl" style="left:167px;top:639px" id="t92">Log To File</div>
<div class="a" style="left:140px;top:662px;width:8px;border-top:1px dotted #ddd"></div><div class="a pbox" style="left:135px;top:658px"></div><svg style="left:149px;top:655px" width="14" height="14" viewBox="0 0 16 16"><use href="#i-loop"/></svg><div class="a tl" style="left:167px;top:657px" id="t93">Loop</div>
<div class="a" style="left:140px;top:680px;width:8px;border-top:1px dotted #ddd"></div><svg style="left:149px;top:673px" width="14" height="14" viewBox="0 0 16 16"><use href="#i-mwc"/></svg><div class="a tl" style="left:167px;top:675px" id="t94">Manage Windows Controls</div>
</div></div>

<div id="taskbar" class="a"></div>
<svg style="left:15px;top:740px" width="17" height="17"><path d="M0 2.3L6.8 1.4V7.6H0ZM7.8 1.2L17 0V7.6H7.8ZM0 8.6H6.8V14.8L0 13.9ZM7.8 8.6H17V16.5L7.8 15.3Z" fill="#fff"/></svg>
<div class="a" style="left:48px;top:728px;width:344px;height:40px;background:#4b514d"></div>
<svg style="left:57px;top:738px" width="22" height="22"><circle cx="10.5" cy="10.5" r="9.3" fill="none" stroke="#f2f2f2" stroke-width="2.2"/></svg>
<div class="a" style="left:88px;top:740.5px;color:#b9bcb9;font-size:14.5px;letter-spacing:-0.1px" id="t95">Type here to search</div>
<svg style="left:365px;top:739px" width="14" height="18"><rect x="3.2" y="0.6" width="6.6" height="12" rx="1" fill="none" stroke="#c4c4c4" stroke-width="1.1"/><rect x="3.2" y="6.5" width="6.6" height="6.1" fill="#c4c4c4"/><path d="M1.2 8V9.5A5.3 5.3 0 0 0 11.8 9.5V8M6.5 14.8V16.4M3.8 16.6H9.2" fill="none" stroke="#c4c4c4" stroke-width="1.1"/></svg>
<svg style="left:407px;top:739px" width="18" height="17"><path d="M1.2 0.5V3.1H11.6V0.5M1.2 16.5V13.9H11.6V16.5" fill="none" stroke="#fff" stroke-width="1.2"/><rect x="1.2" y="5.3" width="10.4" height="6.3" fill="none" stroke="#fff" stroke-width="1.2"/><path d="M15.5 0.5V3.2M15.5 9.2V16.5" stroke="#fff" stroke-width="1.2"/><rect x="14.1" y="4.9" width="2.8" height="3.2" fill="#fff"/></svg>
<!-- explorer -->
<div class="a" style="left:447px;top:766px;width:30px;height:2px;background:#a5b8aa"></div><div class="a" style="left:478px;top:766px;width:8px;height:2px;background:#6e7d72"></div>
<svg style="left:455px;top:739px" width="23" height="19"><path d="M0 1H8L10 3H22V17H0Z" fill="#e8b84a"/><rect x="0" y="5" width="22" height="13" fill="#f8d775"/><path d="M6.5 11H15.5V18H13V14H9V18H6.5Z" fill="#1d9be2"/></svg>
<!-- edge -->
<svg style="left:504px;top:737px" width="21" height="22"><path d="M2 12C1 5 6 0 11.5 0C17.5 0 21 4.5 21 10V12.5H7.5C7.8 16.5 11 18 14.5 18C17 18 19 17.3 20.5 16.3V20.5C18.5 21.5 16.2 22 13.5 22C6.5 22 3 17.5 3 12.5C3 9 5 6.5 8 5.5C6.5 7 6.5 8 6.5 9H15.2C15.2 6 13.8 4.3 11 4.3C7.5 4.3 4 7 2 12Z" fill="#1877d6"/></svg>
<!-- mail -->
<svg style="left:549px;top:737px" width="26" height="21"><path d="M0.8 6.1L12.8 0.9L25 6.1V20.2H0.8Z" fill="#fff"/><path d="M2.5 7.3H23.9L14.8 12L19.5 16.7Z" fill="#1e201f"/></svg>
<!-- outlook -->
<div class="a" style="left:591px;top:766px;width:39px;height:2px;background:#a5b8aa"></div>
<svg style="left:598px;top:736px" width="27" height="26"><rect x="9" y="4" width="14" height="11" fill="#1a73c8"/><path d="M0 3L13 0V24L0 21Z" fill="#0f5fb3"/><ellipse cx="6.5" cy="12" rx="3.2" ry="4.2" fill="none" stroke="#fff" stroke-width="1.8"/><path d="M14 6L18 9.5L22 6" fill="none" stroke="#fff" stroke-width="1.3"/><rect x="10" y="14" width="15" height="11" fill="#f0c383"/><path d="M10 14L17.5 20L25 14" fill="none" stroke="#d99a4a" stroke-width="1"/></svg>
<!-- chrome -->
<div class="a" style="left:639px;top:766px;width:39px;height:2px;background:#a5b8aa"></div>
<svg style="left:646px;top:736px" width="23" height="23"><circle cx="11.5" cy="11.5" r="11.2" fill="#db4437"/><path d="M11.5 11.5L1.8 5.9A11.2 11.2 0 0 0 11.5 22.7Z" fill="#0f9d58"/><path d="M11.5 11.5L21.2 5.9A11.2 11.2 0 0 1 11.5 22.7Z" fill="#fbc02d"/><path d="M11.5 11.5L1.8 5.9A11.2 11.2 0 0 1 21.2 5.9Z" fill="#db4437"/><circle cx="11.5" cy="11.5" r="5.2" fill="#fff"/><circle cx="11.5" cy="11.5" r="4" fill="#4285f4"/></svg>
<!-- webex/cortana-like -->
<div class="a" style="left:687px;top:766px;width:39px;height:2px;background:#a5b8aa"></div>
<svg style="left:695px;top:736px" width="22" height="23"><circle cx="10.8" cy="11.2" r="10.2" fill="#0ab8e8" stroke="#f4f4f4" stroke-width="0.8"/><path d="M16.6 5.4A8.2 8.2 0 1 1 3.1 14" fill="none" stroke="#00628a" stroke-width="3.4"/><circle cx="10.8" cy="11.2" r="6.3" fill="#7ac943"/><circle cx="9.9" cy="10.2" r="5.7" fill="#fff"/></svg>
<!-- uipath -->
<svg style="left:742px;top:736px" width="25" height="24"><rect width="24" height="24" fill="#1e70c1"/><path d="M4.5 5V13C4.5 16 6 17.5 8.5 17.5C11 17.5 12.5 16 12.5 13V5" fill="none" stroke="#fff" stroke-width="2.6"/><rect x="16" y="9" width="2.6" height="9" fill="#fff"/><rect x="16" y="5" width="2.6" height="2.6" fill="#fff"/></svg>
<!-- skype -->
<div class="a" style="left:783px;top:766px;width:30px;height:2px;background:#a5b8aa"></div><div class="a" style="left:813px;top:766px;width:9px;height:2px;background:#6e7d72"></div>
<svg style="left:790px;top:737px" width="27" height="25"><circle cx="6" cy="6" r="5.5" fill="#0aa7ee"/><circle cx="15" cy="15" r="5.5" fill="#0aa7ee"/><circle cx="10.5" cy="10.5" r="9" fill="#0aa7ee"/><circle cx="10.5" cy="10.5" r="7" fill="#fff"/><path d="M13.5 7.5C12.5 6.3 8 6 8 8.5C8 11 13.5 10 13.5 13C13.5 15 9 15.5 7.5 13.5" fill="none" stroke="#0aa7ee" stroke-width="2"/><circle cx="20" cy="18" r="6" fill="#92c353"/><circle cx="20" cy="18" r="6" fill="none" stroke="#1e201f" stroke-width="1"/><path d="M17 18L19.2 20L23 16" fill="none" stroke="#fff" stroke-width="1.4"/></svg>
<!-- word -->
<div class="a" style="left:831px;top:766px;width:39px;height:2px;background:#a5b8aa"></div>
<svg style="left:838px;top:737px" width="24" height="23"><rect x="9" y="3" width="14" height="17" fill="#fff"/><path d="M11 6H21M11 8.5H21M11 11H21M11 13.5H21M11 16H21" stroke="#2b579a" stroke-width="1"/><path d="M0 2.5L13 0V23L0 20.5Z" fill="#2b579a"/><path d="M2.5 7.5L4.2 15L6.3 9.5L8.3 15L10 7.5" fill="none" stroke="#fff" stroke-width="1.3"/></svg>
<!-- excel -->
<div class="a" style="left:879px;top:766px;width:39px;height:2px;background:#a5b8aa"></div>
<svg style="left:886px;top:737px" width="24" height="23"><rect x="9" y="3" width="14" height="17" fill="#fff"/><path d="M11 6H21M11 9H21M11 12H21M11 15H21M16 4V19" stroke="#217346" stroke-width="1"/><path d="M0 2.5L13 0V23L0 20.5Z" fill="#217346"/><path d="M3 7.5L9 15.5M9 7.5L3 15.5" stroke="#fff" stroke-width="1.6"/></svg>
<!-- teams -->
<div class="a" style="left:927px;top:766px;width:39px;height:2px;background:#a5b8aa"></div>
<svg style="left:933px;top:736px" width="27" height="26"><circle cx="21" cy="5" r="2.8" fill="#7b83eb"/><path d="M17 9H25V16C25 19 23 20 21 20C19 20 17 19 17 16Z" fill="#5059c9"/><circle cx="13" cy="3.5" r="3.5" fill="#7b83eb"/><path d="M8 8H19V18C19 22 16.5 24 13.5 24C10.5 24 8 22 8 18Z" fill="#7b83eb"/><rect x="0" y="6" width="13" height="13" fill="#4b53bc"/><path d="M3 9H10M6.5 9V16.5" stroke="#fff" stroke-width="1.8"/><circle cx="20.5" cy="19.5" r="6" fill="#92c353"/><circle cx="20.5" cy="19.5" r="6" fill="none" stroke="#1e201f" stroke-width="1"/><path d="M17.5 19.5L19.7 21.5L23.5 17.5" fill="none" stroke="#fff" stroke-width="1.4"/></svg>
<!-- photos active -->
<div class="a" style="left:990px;top:728px;width:46px;height:40px;background:#3b413d"></div>
<div class="a" style="left:990px;top:766px;width:46px;height:2px;background:#a5b8aa"></div>
<svg style="left:1002px;top:737px" width="22" height="22" viewBox="0 0 16 16"><rect x="0.62" y="0.62" width="14.76" height="14.76" fill="none" stroke="#fff" stroke-width="1.25"/><path d="M1 9.4L5.5 3.9L9.3 8.6L11.4 6.1L15 10.2V15H1Z" fill="#fff"/><path d="M9.3 8.6L14 14" stroke="#3b413d" stroke-width="0.9"/></svg>
<!-- tray -->
<svg style="left:1061px;top:740px" width="17" height="16"><circle cx="11.4" cy="2.9" r="2.3" fill="none" stroke="#fff" stroke-width="1.1"/><path d="M8.3 8.7A4 4 0 0 1 15.3 9.6" fill="none" stroke="#fff" stroke-width="1.1"/><circle cx="5.1" cy="8.9" r="2.4" fill="none" stroke="#fff" stroke-width="1.1"/><path d="M0.8 15.5A4.5 4.5 0 0 1 9.4 15.5" fill="none" stroke="#fff" stroke-width="1.1"/></svg>
<svg style="left:1098px;top:744px" width="14" height="8"><path d="M0.5 7L6.5 1L12.5 7" fill="none" stroke="#fff" stroke-width="1.2"/></svg>
<svg style="left:1120px;top:742px" width="18" height="12"><path d="M2.5 11C1 11 0.4 9.8 0.4 8.8C0.4 7.3 1.6 6.3 3 6.5C3.5 3 6 1 9 1C11.5 1 13.3 2.5 14 4.6C16.3 4.6 17.6 6.3 17.6 8C17.6 9.8 16.3 11 14.8 11Z" fill="#0f6fc6"/><path d="M2.5 11C1 11 0.4 9.8 0.4 8.8C0.4 7.5 1.5 6.5 3 6.5L7 8.5L11 6C12.5 5.2 14 5 15 5.2C16.6 5.6 17.6 6.6 17.6 8C17.6 9.8 16.3 11 14.8 11Z" fill="#28a8ea"/></svg>
<svg style="left:1145px;top:742px" width="17" height="13"><path d="M1 1V4M4 1V4M0 4H5V6C5 8 3.5 8.5 2.5 8.5M2.5 8.5V12" fill="none" stroke="#fff" stroke-width="1.1"/><rect x="5.5" y="4.5" width="9.5" height="7" fill="none" stroke="#fff" stroke-width="1.1"/><rect x="7" y="6" width="6.5" height="4" fill="#fff"/><rect x="15" y="6.5" width="1.5" height="3" fill="#fff"/></svg>
<svg style="left:1171px;top:743px" width="14" height="13"><path d="M0.5 6.5A11 11 0 0 1 13 1M2.5 8.5A8 8 0 0 1 11.5 4M4.5 10.5A5 5 0 0 1 10 7" fill="none" stroke="#8a8a8a" stroke-width="1.1"/><circle cx="10.5" cy="11" r="1.5" fill="#fff"/></svg>
<svg style="left:1192px;top:741px" width="19" height="15"><path d="M0.6 4.5H4L8.5 0.6V14.4L4 10.5H0.6Z" fill="none" stroke="#fff" stroke-width="1.1"/><path d="M11 4.5A4 4 0 0 1 11 10.5M13.5 2.5A7 7 0 0 1 13.5 12.5M16 0.5A10 10 0 0 1 16 14.5" fill="none" stroke="#fff" stroke-width="1.1"/></svg>
<div class="a" style="left:1219px;top:732px;color:#fff;font-size:12px;line-height:17px;text-align:center;width:24px" id="t96">ENG<br>IN</div>
<div class="a" style="left:1254px;top:732px;color:#fff;font-size:12px;line-height:17px;text-align:center;width:54px" id="t97">3:56 PM<br>11/1/2019</div>
<svg style="left:1325px;top:740px" width="30" height="28"><path d="M0 0H16V11H4.5L0 14.5Z" fill="#fff"/><path d="M3 3H13M3 5.5H13M3 8H13" stroke="#1e201f" stroke-width="1.1"/><circle cx="15.5" cy="16.5" r="9.3" fill="#2f3331" stroke="#7d8480" stroke-width="1.2"/><text x="15.5" y="21" font-size="12.5" fill="#fff" text-anchor="middle" font-family="Liberation Sans">23</text></svg>
<div class="a" style="left:1360px;top:728px;width:1px;height:40px;background:#4a4d4b"></div>
<!-- expand icon -->
<svg style="left:1332px;top:694px" width="21" height="20"><path d="M1 19L20 1M12 1H20V9M1 11V19H9" fill="none" stroke="#fff" stroke-width="1.3"/></svg>
</body></html>
